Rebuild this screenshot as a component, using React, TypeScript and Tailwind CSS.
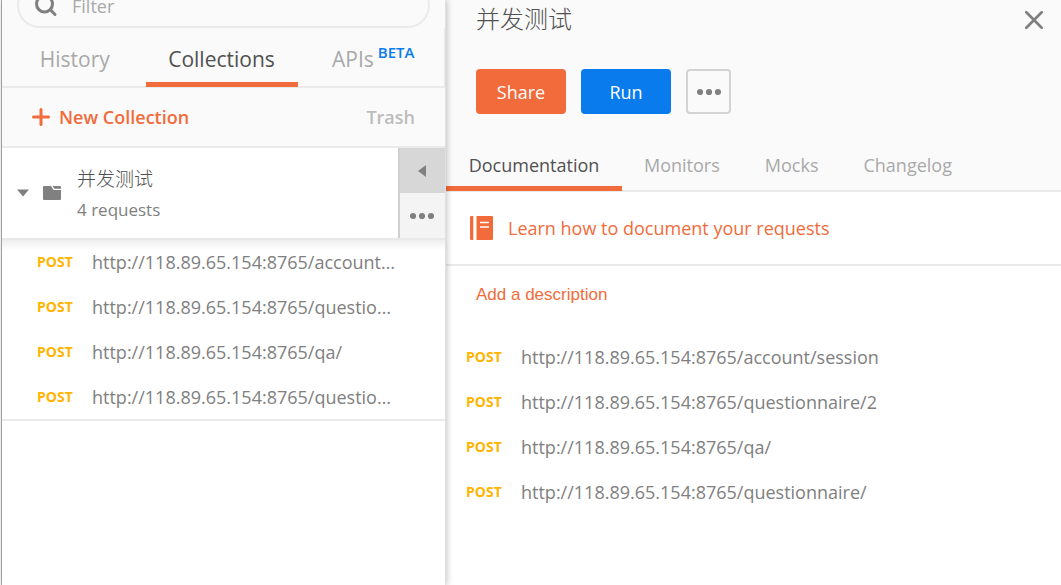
import React from "react";

type Request = { method: string; url: string };

const collectionRequests: Request[] = [
  { method: "POST", url: "http://118.89.65.154:8765/account/session" },
  { method: "POST", url: "http://118.89.65.154:8765/questionnaire/2" },
  { method: "POST", url: "http://118.89.65.154:8765/qa/" },
  { method: "POST", url: "http://118.89.65.154:8765/questionnaire/" },
];

function Dots() {
  return (
    <svg width="24" height="8" viewBox="0 0 24 8" fill="#808080" aria-hidden="true">
      <circle cx="3" cy="4" r="3.1" />
      <circle cx="12" cy="4" r="3.1" />
      <circle cx="21" cy="4" r="3.1" />
    </svg>
  );
}

function RequestLink({ method, url }: Request) {
  return (
    <a href="#request" className="flex h-[45px] min-w-0 items-center">
      <span className="w-[55px] shrink-0 text-sm font-bold text-[#ffb400]">{method}</span>
      <span className="truncate text-lg text-[#808080]">{url}</span>
    </a>
  );
}

function Sidebar() {
  return (
    <aside className="relative z-10 ml-px flex w-[445px] shrink-0 flex-col border-l border-r border-l-[#a0a0a0] border-r-[#e0e0e0] bg-white shadow-[1px_0_6px_rgba(0,0,0,0.24)]">
      <div className="flex h-7 items-end overflow-hidden bg-[#fafafa] px-[15px]">
        <label className="flex h-[45px] flex-1 items-center rounded-full border-2 border-[#eaeaea] pl-[15px]">
          <svg width="24" height="24" viewBox="0 0 24 24" fill="none" stroke="#808080" strokeWidth="3" aria-hidden="true">
            <circle cx="10.5" cy="10" r="8" />
            <path d="M16.3 15.8 L21 20.5" strokeLinecap="round" />
          </svg>
          <input
            type="text"
            aria-label="Filter"
            placeholder="Filter"
            className="ml-[14px] w-64 bg-transparent text-lg outline-none placeholder:text-[#a9a9a9]"
          />
        </label>
      </div>

      <nav className="flex h-[60px] border-r border-b-2 border-[#eaeaea] bg-[#fafafa] pl-[2px] text-[21px] text-[#a9a9a9]">
        <button type="button" className="flex-1 pt-[6px]">History</button>
        <button type="button" className="relative w-[152px] pt-[6px] text-[#505050]">
          Collections
          <span className="absolute inset-x-0 -bottom-px h-[5px] bg-[#f26b3a]" />
        </button>
        <button type="button" className="flex flex-1 items-center justify-center gap-1 pt-[6px] pl-[5px]">
          APIs
          <span className="pb-4 text-[15px] font-semibold text-[#097bed]">BETA</span>
        </button>
      </nav>

      <div className="flex h-[60px] items-center justify-between border-b-2 border-[#eaeaea] bg-[#fafafa] px-[30px] text-lg font-semibold">
        <button type="button" className="flex items-center gap-[9px] text-[#f26b3a]">
          <svg width="18" height="18" viewBox="0 0 18 18" stroke="#f26b3a" strokeWidth="3" strokeLinecap="round" aria-hidden="true">
            <path d="M9 1.5V16.5M1.5 9H16.5" />
          </svg>
          New Collection
        </button>
        <button type="button" className="text-[#bcbcbc]">Trash</button>
      </div>

      <div className="relative mb-px flex h-[90px]">
        <button type="button" className="flex flex-1 items-center pl-[15px] text-left">
          <svg width="12" height="8" viewBox="0 0 12 8" fill="#808080" aria-hidden="true">
            <path d="M0 .5H12L6 7.5Z" />
          </svg>
          <svg className="ml-[14px]" width="18" height="14" viewBox="0 0 18 14" fill="#808080" aria-hidden="true">
            <path d="M1 0H8L10.6 4H18V13Q18 14 17 14H1Q0 14 0 13V1Q0 0 1 0Z" />
            <path d="M9.5 0H17Q18 0 18 1V2.8H11.3Z" />
          </svg>
          <span className="ml-4 flex flex-col pt-[2px]">
            <span className="font-['Noto_Sans_CJK_SC',sans-serif] text-[19px] leading-8 font-light text-[#505050]">并发测试</span>
            <span className="text-[17px] leading-8 text-[#808080]">4 requests</span>
          </span>
        </button>
        <div className="flex w-[47px] flex-col border-l-2 border-[#d0d0d0]">
          <button type="button" aria-label="Collapse details" className="flex flex-1 items-center justify-center bg-[#d7d7d7] pr-[2px]">
            <svg width="8" height="12" viewBox="0 0 8 12" fill="#808080" aria-hidden="true">
              <path d="M8 0V12L0 6Z" />
            </svg>
          </button>
          <button type="button" aria-label="Collection actions" className="flex flex-1 items-center justify-center bg-[#f4f4f4] pr-px">
            <Dots />
          </button>
        </div>
        <div className="pointer-events-none absolute inset-x-0 top-full h-3 border-t-2 border-[#e8e8e8] bg-linear-to-b from-black/8 to-transparent bg-origin-border" />
      </div>

      <ul className="border-b-2 border-[#eaeaea] pr-[45px] pl-[35px]">
        {collectionRequests.map((request) => (
          <li key={request.url}>
            <RequestLink {...request} />
          </li>
        ))}
      </ul>
    </aside>
  );
}

function Details() {
  return (
    <main className="min-w-0 flex-1 bg-white">
      <header className="border-b-2 border-[#eaeaea] bg-[#fafafa]">
        <div className="flex h-10 items-center justify-between pr-[18px] pl-[30px]">
          <h1 className="pb-1 font-['Noto_Sans_CJK_SC',sans-serif] text-2xl font-light text-[#505050]">并发测试</h1>
          <button type="button" aria-label="Close">
            <svg width="18" height="18" viewBox="0 0 18 18" stroke="#808080" strokeWidth="2.7" strokeLinecap="round" aria-hidden="true">
              <path d="M1.3 1.3L16.7 16.7M16.7 1.3L1.3 16.7" />
            </svg>
          </button>
        </div>
        <div className="mt-[29px] flex h-[45px] gap-[15px] pl-[30px] text-lg font-medium text-white">
          <button type="button" className="w-[90px] rounded bg-[#f26b3a]">Share</button>
          <button type="button" className="w-[90px] rounded bg-[#097bed]">Run</button>
          <button type="button" aria-label="More actions" className="flex w-[45px] items-center justify-center rounded border-2 border-[#d3d3d3]">
            <Dots />
          </button>
        </div>
        <nav className="mt-[26px] flex h-[50px] text-lg text-[#a9a9a9]">
          <button type="button" className="relative w-[176px] text-[#505050]">
            Documentation
            <span className="absolute inset-x-0 -bottom-px h-[5px] bg-[#f26b3a]" />
          </button>
          <button type="button" className="px-[22px]">Monitors</button>
          <button type="button" className="px-[23px]">Mocks</button>
          <button type="button" className="px-[22px]">Changelog</button>
        </nav>
      </header>

      <div className="flex h-[74px] items-center border-b-2 border-[#eaeaea] pl-6">
        <a href="#learn" className="flex items-center gap-[15px] text-lg text-[#f26b3a]">
          <svg width="23" height="24" viewBox="0 0 23 24" aria-hidden="true">
            <path d="M1 0H3.3V24H1Q0 24 0 23V1Q0 0 1 0ZM6.5 0H22Q23 0 23 1V23Q23 24 22 24H6.5Z" fill="#f26b3a" />
            <path d="M10 6.5H19M10 11H19" stroke="#fff" strokeWidth="1.5" />
          </svg>
          Learn how to document your requests
        </a>
      </div>

      <div className="flex h-[68px] items-start pt-[17px] pl-[30px]">
        <button type="button" className="font-['Liberation_Sans',Arial,sans-serif] text-[17px] leading-6 text-[#f26b3a]">
          Add a description
        </button>
      </div>

      <ul className="px-5">
        {collectionRequests.map((request) => (
          <li key={request.url}>
            <RequestLink {...request} />
          </li>
        ))}
      </ul>
    </main>
  );
}

export default function App() {
  return (
    <div className="flex min-h-screen bg-white font-['Open_Sans','Noto_Sans_CJK_SC',sans-serif]">
      <Sidebar />
      <Details />
    </div>
  );
}
